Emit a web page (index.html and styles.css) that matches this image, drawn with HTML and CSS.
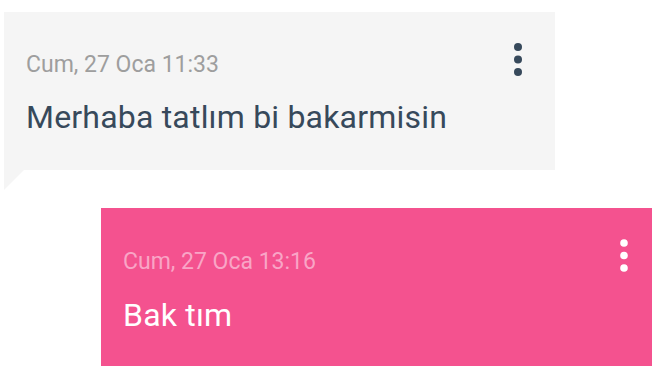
FILE: index.html
```html
<!DOCTYPE html>
<html lang="tr">
<head>
    <meta charset="UTF-8">
    <meta name="viewport" content="width=device-width, initial-scale=1.0">
    <title>Mesajlar</title>
    <link rel="stylesheet" href="styles.css">
</head>
<body>
    <div class="thread">
        <div class="message incoming">
            <div class="message-date">Cum, 27 Oca 11:33</div>
            <div class="message-text">Merhaba tatlım bi bakarmisin</div>
            <button class="menu-btn" aria-label="Seçenekler">
                <svg width="8" height="34" viewBox="0 0 8 34"><circle cx="4" cy="4" r="4"/><circle cx="4" cy="16.5" r="4"/><circle cx="4" cy="29" r="4"/></svg>
            </button>
        </div>
        <div class="message outgoing">
            <div class="message-date">Cum, 27 Oca 13:16</div>
            <div class="message-text">Bak tım</div>
            <button class="menu-btn" aria-label="Seçenekler">
                <svg width="8" height="34" viewBox="0 0 8 34"><circle cx="4" cy="4" r="3.8"/><circle cx="4" cy="16.5" r="3.8"/><circle cx="4" cy="29" r="3.8"/></svg>
            </button>
        </div>
    </div>
</body>
</html>
```

FILE: styles.css
```css
body {
    font-family: Roboto, "Liberation Sans", sans-serif;
    margin: 0;
    padding: 0;
    background-color: #ffffff;
    overflow: hidden;
}
.thread {
    display: flex;
    flex-direction: column;
    gap: 38px;
    padding: 12px 20px 0 4px;
}
.message {
    position: relative;
    width: 551px;
    height: 158px;
    box-sizing: border-box;
    padding: 40px 22px 0 22px;
}
.message::after {
    content: "";
    position: absolute;
    top: 100%;
    width: 0;
    height: 0;
}
.message-date {
    font-size: 23px;
    line-height: 26px;
}
.message-text {
    margin-top: 21px;
    font-size: 32px;
    line-height: 37px;
    letter-spacing: 0.2px;
}
.menu-btn {
    position: absolute;
    top: 31px;
    background: none;
    border: 0;
    padding: 0;
    display: flex;
}
.incoming {
    background-color: #f5f5f5;
}
.incoming::after {
    left: 0;
    border-top: 20px solid #f5f5f5;
    border-right: 20px solid transparent;
}
.incoming .message-date {
    color: #9e9e9e;
}
.incoming .message-text {
    color: #37495b;
}
.incoming .menu-btn {
    right: 33px;
    fill: #37495b;
}
.outgoing {
    align-self: flex-end;
    background-color: #f4528f;
    padding-top: 41px;
}
.outgoing::after {
    right: 0;
    border-top: 20px solid #f4528f;
    border-left: 20px solid transparent;
}
.outgoing .message-date {
    color: #f9a5c6;
}
.outgoing .message-text {
    color: #ffffff;
    margin-top: 22px;
}
.outgoing .menu-btn {
    top: 31px;
    right: 24px;
    fill: #ffffff;
}
```
